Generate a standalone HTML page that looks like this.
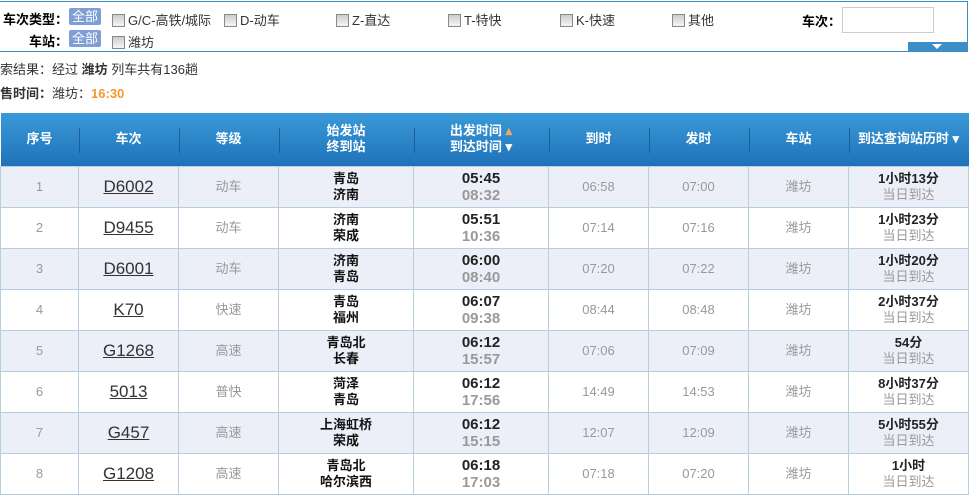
<!DOCTYPE html><html><head><meta charset="utf-8"><style>
*{margin:0;padding:0;box-sizing:border-box}
body{width:978px;height:498px;overflow:hidden;background:#fff;font-family:"Liberation Sans","Noto Sans CJK SC",sans-serif;font-size:13px;color:#333;position:relative}
.box{position:absolute;left:-2px;top:1px;width:970px;height:51px;border:1px solid #3b8fc4;border-left:none}
.a{position:absolute;white-space:nowrap;font-size:13px}
.b{font-weight:bold;color:#000}
.all{position:absolute;background:#7e9fd6;color:#fff;font-size:13px;padding:0 3px;height:17px;line-height:17px;border-radius:2px}
.cb{display:inline-block;width:13px;height:13px;border:1px solid #888;background:linear-gradient(#ccc,#f5f5f5);vertical-align:-2px;margin-right:3px}
table{position:absolute;left:0;top:113px;border-collapse:collapse;table-layout:fixed;width:968px}
th{height:53px;background:linear-gradient(#3a9ad8,#1f72ba);color:#fff;font-weight:bold;font-size:13px;line-height:16px;position:relative}
th+th:before{content:"";position:absolute;left:0;top:15px;height:25px;border-left:1px solid #1a5f99}
td{height:41px;border:1px solid #b7cde0;text-align:center;font-size:13px;color:#999;line-height:16px}
tr:nth-child(even) td{background:#eceff8}
td.n{color:#333;font-size:17px;text-decoration:underline}
td.s{color:#111;font-weight:bold}
td.t b{font-size:15px;color:#222;display:block;line-height:17px}
td.t i{font-style:normal;font-size:15px;color:#999;font-weight:bold;display:block;line-height:17px}
td.d b{color:#222;font-size:13px;display:block}
</style></head><body>
<div class="box"></div>
<div class="a b" style="left:3px;top:9px">车次类型：</div>
<div class="all" style="left:69px;top:8px">全部</div>
<div class="a" style="left:112px;top:10px"><span class="cb"></span>G/C-高铁/城际</div>
<div class="a" style="left:224px;top:10px"><span class="cb"></span>D-动车</div>
<div class="a" style="left:336px;top:10px"><span class="cb"></span>Z-直达</div>
<div class="a" style="left:448px;top:10px"><span class="cb"></span>T-特快</div>
<div class="a" style="left:560px;top:10px"><span class="cb"></span>K-快速</div>
<div class="a" style="left:672px;top:10px"><span class="cb"></span>其他</div>
<div class="a b" style="left:802px;top:11px">车次：</div>
<div style="position:absolute;left:842px;top:7px;width:92px;height:26px;border:1px solid #ccc"></div>
<div style="position:absolute;left:908px;top:42px;width:60px;height:10px;background:#3b8fc4"></div>
<div style="position:absolute;left:932px;top:44px;border-left:5px solid transparent;border-right:5px solid transparent;border-top:5px solid #fff"></div>
<div class="a b" style="left:29px;top:31px">车站：</div>
<div class="all" style="left:69px;top:30px">全部</div>
<div class="a" style="left:112px;top:32px"><span class="cb"></span>潍坊</div>
<div class="a" style="left:0;top:59px">索结果：经过 <b>潍坊</b> 列车共有136趟</div>
<div class="a" style="left:0;top:83px"><b>售时间：</b>潍坊：<b style="color:#f09a30;font-size:13px">16:30</b></div>
<table>
<colgroup><col style="width:78px"><col style="width:100px"><col style="width:100px"><col style="width:135px"><col style="width:135px"><col style="width:100px"><col style="width:100px"><col style="width:100px"><col style="width:120px"></colgroup>
<tr><th>序号</th><th>车次</th><th>等级</th><th>始发站<br>终到站</th><th>出发时间 <span style="color:#f5a65b">▴</span><br>到达时间 ▾</th><th>到时</th><th>发时</th><th>车站</th><th>到达查询站历时 ▾</th></tr>
<tr><td>1</td><td class="n">D6002</td><td>动车</td><td class="s">青岛<br>济南</td><td class="t"><b>05:45</b><i>08:32</i></td><td>06:58</td><td>07:00</td><td>潍坊</td><td class="d"><b>1小时13分</b>当日到达</td></tr>
<tr><td>2</td><td class="n">D9455</td><td>动车</td><td class="s">济南<br>荣成</td><td class="t"><b>05:51</b><i>10:36</i></td><td>07:14</td><td>07:16</td><td>潍坊</td><td class="d"><b>1小时23分</b>当日到达</td></tr>
<tr><td>3</td><td class="n">D6001</td><td>动车</td><td class="s">济南<br>青岛</td><td class="t"><b>06:00</b><i>08:40</i></td><td>07:20</td><td>07:22</td><td>潍坊</td><td class="d"><b>1小时20分</b>当日到达</td></tr>
<tr><td>4</td><td class="n">K70</td><td>快速</td><td class="s">青岛<br>福州</td><td class="t"><b>06:07</b><i>09:38</i></td><td>08:44</td><td>08:48</td><td>潍坊</td><td class="d"><b>2小时37分</b>当日到达</td></tr>
<tr><td>5</td><td class="n">G1268</td><td>高速</td><td class="s">青岛北<br>长春</td><td class="t"><b>06:12</b><i>15:57</i></td><td>07:06</td><td>07:09</td><td>潍坊</td><td class="d"><b>54分</b>当日到达</td></tr>
<tr><td>6</td><td class="n">5013</td><td>普快</td><td class="s">菏泽<br>青岛</td><td class="t"><b>06:12</b><i>17:56</i></td><td>14:49</td><td>14:53</td><td>潍坊</td><td class="d"><b>8小时37分</b>当日到达</td></tr>
<tr><td>7</td><td class="n">G457</td><td>高速</td><td class="s">上海虹桥<br>荣成</td><td class="t"><b>06:12</b><i>15:15</i></td><td>12:07</td><td>12:09</td><td>潍坊</td><td class="d"><b>5小时55分</b>当日到达</td></tr>
<tr><td>8</td><td class="n">G1208</td><td>高速</td><td class="s">青岛北<br>哈尔滨西</td><td class="t"><b>06:18</b><i>17:03</i></td><td>07:18</td><td>07:20</td><td>潍坊</td><td class="d"><b>1小时</b>当日到达</td></tr>
</table>
</body></html>
